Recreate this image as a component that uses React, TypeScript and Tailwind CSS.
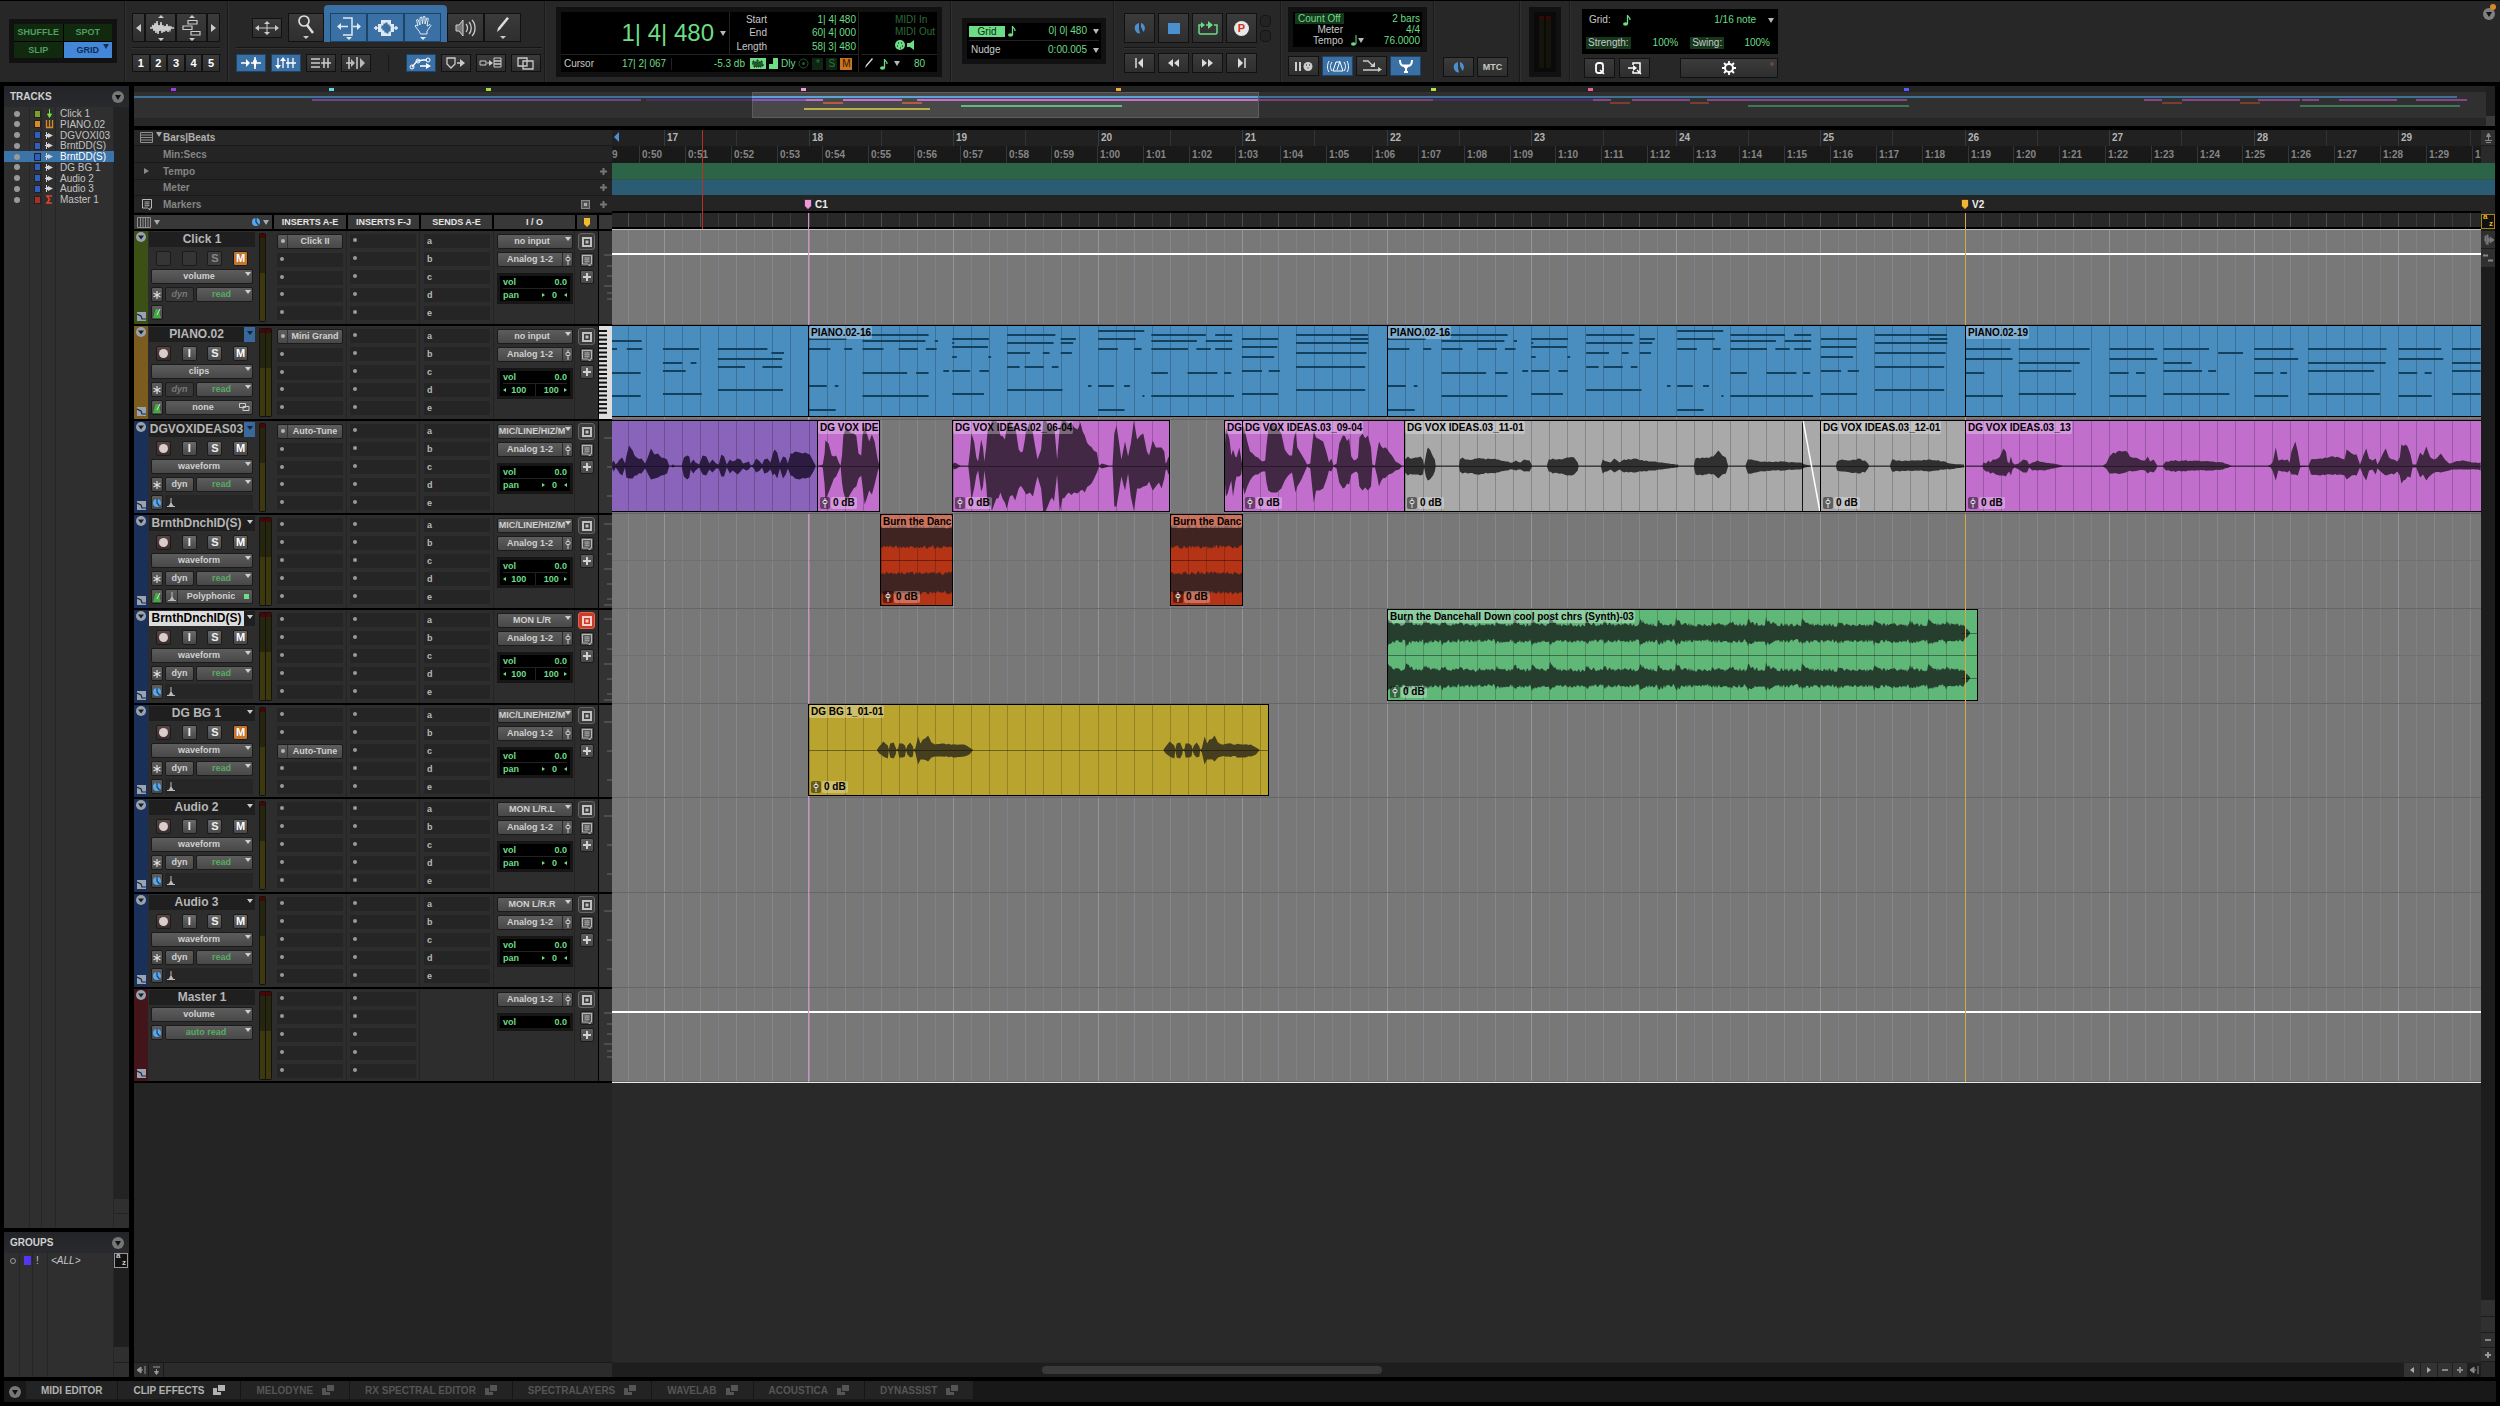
import React from "react";

type Pt = [number, number, number];
const F = "font-['Liberation_Sans',Arial,sans-serif]";

/* ---------- timeline geometry ---------- */
const BAR = 144.5;
const BAR17 = 52;
const LANE_H = 92;
const TW = 1869;

const parse = (s: string): Pt[] => s.split(",").map((p) => p.trim().split(" ").map(Number) as Pt);
const rnd = (n: number) => {
  const v = Math.sin(n * 127.1 + 3.7) * 43758.5453;
  return v - Math.floor(v);
};

function envelope(src: string, origin: number, scale: number, mid = 46, shift = 0) {
  const pts = parse(src).map(([x, u, d]) => [origin + (x + shift) / scale, u, d] as Pt);
  const full: Pt[] = [];
  pts.forEach((p, i) => {
    full.push(p);
    const n = pts[i + 1];
    if (!n) return;
    const steps = Math.floor((n[0] - p[0]) / 2);
    for (let k = 1; k < steps; k++) {
      const t = k / steps;
      const j = 0.86 + rnd(p[0] + k * 1.7) * 0.24;
      full.push([p[0] + (n[0] - p[0]) * t, (p[1] + (n[1] - p[1]) * t) * j, (p[2] + (n[2] - p[2]) * t) * j]);
    }
  });
  const top = full.map(([x, u]) => `${x.toFixed(1)},${(mid - u - 0.4).toFixed(1)}`);
  const bot = full.map(([x, , d]) => `${x.toFixed(1)},${(mid + d + 0.4).toFixed(1)}`).reverse();
  return `M${top.join("L")}L${bot.join("L")}Z`;
}

function band(from: number, to: number, mid: number, base: number, spike: number, seed: number) {
  const top: string[] = [];
  const bot: string[] = [];
  for (let x = from; x <= to; x += 1) {
    const ph = ((x - from) % 18) / 18;
    const kick = Math.exp(-ph * 4) * spike * rnd(Math.floor((x - from) / 18) + seed);
    const fade = Math.min(1, (to - x) / 8 + 0.1);
    top.push(`${x},${(mid - (base + kick + rnd(x + seed) * 3.6) * fade).toFixed(1)}`);
    bot.push(`${x},${(mid + (base + kick * 0.7 + rnd(x * 1.3 + seed) * 3.6) * fade).toFixed(1)}`);
  }
  return `M${top.join("L")}L${bot.reverse().join("L")}Z`;
}

const GRID = Array.from({ length: 107 }, (_, k) => k - 3).map((k) => ({
  x: Math.round(BAR17 + (k * BAR) / 8),
  major: k % 8 === 0,
  beat: k % 2 === 0,
}));

/* ---------- waveforms ---------- */
const W_PURPLE =
  "27 3 2,31 5 5,35 1 1,44 6 7,50 8 9,56 2 1,59 9 11,65 20 12,73 15 12,82 8 9,93 7 7,101 2 2,107 8 7,114 17 13,122 11 12,130 12 11,137 8 9,150 6 7,155 0 0,160 0 0,163 1 1,168 0 0,183 0 0,188 8 10,195 10 13,200 9 11,203 2 3,209 6 7,214 3 4,222 1 1,230 10 8,238 9 9,245 2 3,252 6 6,260 2 2,266 1 2,272 11 10,278 9 10,284 1 1,291 6 7,297 4 4,303 5 6,308 7 8,315 6 5,320 2 2,328 3 4,333 4 3,338 0 0,343 1 1,350 7 6,358 4 4,363 1 1,368 6 7,375 7 6,382 3 3,387 12 9,391 16 7,397 13 12,403 2 2,410 9 12,416 8 8,421 2 2,427 12 9,437 14 12,447 13 13,460 13 12,470 11 11,478 4 5,483 0 0";
const W_PINK1 =
  "488 0 0,499 1 1,503 12 18,505 25 33,512 22 26,519 10 18,524 9 12,529 10 10,535 3 4,539 0 0,542 10 16,545 30 25,551 38 34,560 33 28,568 32 22,574 30 20,579 12 12,585 10 9,588 30 20,593 39 38,599 30 30,603 24 24,609 31 28,615 24 18,622 6 5,626 0 0";
const W_PINK2 =
  "789 0 0,793 3 3,799 2 2,808 0 0,825 0 0,829 15 15,832 32 34,838 24 22,843 8 9,847 4 4,854 26 25,858 18 20,861 4 4,865 18 18,868 34 38,878 45 44,888 44 32,897 30 26,907 26 36,911 38 42,918 45 30,930 40 34,938 16 22,947 14 22,955 34 28,963 44 26,970 32 30,980 6 10,988 16 22,993 45 45,998 45 45,1008 38 34,1017 42 35,1024 6 8,1030 38 45,1036 45 32,1050 42 26,1062 38 26,1070 36 27,1076 43 24,1086 30 26,1096 20 19,1106 15 13,1113 13 6,1118 0 0,1124 2 2,1132 1 1,1140 0 0,1148 0 0,1152 32 40,1157 40 40,1163 22 24,1168 6 10,1176 24 24,1183 9 7,1189 22 30,1196 45 44,1203 26 22,1210 30 22,1217 32 20,1225 14 19,1230 10 15,1238 25 24,1245 18 20,1252 18 16,1258 18 22,1264 14 12,1267 2 4,1270 4 3,1273 9 8,1276 6 6";
const W_PINK3 = "54 5 5,58 38 30,62 32 27,66 26 20,70 10 14,74 16 30,79 9 15,82 8 10,88 18 10,92 8 8,94 2 2";
const W_PINK4 =
  "96 40 20,100 36 28,106 24 20,112 14 14,118 12 10,130 8 8,140 4 5,146 5 5,149 20 16,153 36 24,160 42 26,172 38 26,182 32 22,190 16 14,200 10 8,206 10 6,210 26 16,214 34 26,218 18 20,226 12 14,234 6 6,240 1 0,247 2 2,251 20 20,255 34 36,260 28 24,268 26 24,276 24 22,284 12 12,289 3 4,294 7 5,299 0 0,306 2 2,312 22 16,320 30 22,334 27 18,339 9 8,345 5 6,350 6 5,354 8 7,357 28 20,364 32 24,376 30 24,383 18 20,386 1 1,392 0 1,397 14 10,401 24 20,406 19 14,420 16 9,430 10 7,438 4 4,446 2 3,452 0 0,458 0 0";
const W_GRAY1 =
  "459 6 6,466 9 9,475 7 8,482 8 8,494 9 9,499 6 8,502 0 1,506 10 10,510 18 14,515 16 13,522 9 9,526 6 5,528 0 0,580 0 0,582 6 5,588 8 7,600 6 7,620 7 8,645 7 7,665 6 6,685 4 4,700 3 3,708 5 4,718 3 3,726 6 5,738 5 5,744 0 0,777 0 0,781 6 5,790 7 7,810 6 7,822 8 9,838 8 8,846 3 4,848 0 0,898 0 0,902 6 7,912 4 5,920 3 3,928 7 6,940 3 3,950 6 6,975 7 6,1000 5 5,1020 4 4,1050 2 2,1070 1 1,1072 0 0,1106 0 0,1110 7 8,1125 8 9,1145 9 8,1154 11 9,1161 15 12,1170 10 8,1178 8 7,1183 0 0,1222 0 0,1227 6 7,1245 5 6,1265 4 5,1290 4 4,1310 4 4,1345 3 3,1355 1 1,1372 0 0,1390 0 0";
const W_GRAY2 =
  "1209 0 0,1224 0 0,1225 4 4,1230 6 5,1238 5 6,1246 7 7,1253 5 6,1256 2 2,1257 0 0,1278 0 0,1280 6 5,1288 5 5,1308 5 4,1318 6 5,1333 4 3,1338 2 3,1352 1 1";
const W_PINK5 =
  "278 0 0,319 0 0,322 3 3,328 2 5,334 5 5,338 3 7,345 6 6,352 6 8,360 8 9,365 12 9,370 17 9,376 14 10,380 4 7,384 2 5,388 9 9,392 3 3,397 1 1,407 2 3,418 6 6,427 5 6,432 1 1,440 3 4,452 5 4,470 3 4,490 2 2,513 0 0,610 0 0,618 2 2,626 9 7,635 13 7,655 14 7,670 13 5,680 8 5,695 7 4,712 5 4,718 9 7,724 4 5,732 6 6,738 2 3,741 0 0,754 0 0,762 4 4,775 5 5,800 5 5,840 5 4,875 4 4,900 3 3,921 0 0,1008 0 0,1015 1 1,1020 4 5,1027 18 14,1033 5 4,1042 6 5,1055 6 6,1060 3 4,1065 14 8,1074 24 8,1080 14 9,1086 0 1,1106 0 0,1112 6 8,1135 7 9,1160 9 8,1180 8 8,1193 6 9,1198 16 13,1210 12 9,1222 11 9,1230 1 1,1238 10 9,1245 17 14,1252 7 4,1260 5 3,1268 7 8,1272 1 2,1280 7 5,1292 17 9,1300 8 8,1312 6 8,1320 4 5,1326 8 9,1330 21 17,1345 19 10,1352 11 11,1357 1 1,1366 1 1,1375 13 11,1382 10 8,1390 19 14,1400 8 9,1410 6 6,1425 12 6,1435 6 5,1445 2 4,1460 4 3,1475 5 3,1490 4 3,1510 3 3,1521 3 4";
const W_BG =
  "282 0 0,288 3 3,300 8 6,306 6 7,313 4 8,316 0 0,320 6 7,330 7 8,336 2 4,338 0 0,343 1 1,346 6 7,356 6 7,363 4 6,366 0 0,370 4 4,378 7 7,386 3 6,388 0 0,393 1 2,397 7 8,401 13 14,408 6 9,415 10 9,430 14 11,440 7 7,450 5 6,470 6 6,510 5 7,535 5 6,550 2 4,560 0 0";

/* ---------- piano notes: row, then start-end pairs ---------- */
type Notes = [number, string][];
const N_INTRO: Notes = [
  [425, "27-93"], [448, "27-38 60-95 141-222 264-375"], [460, "384-412"], [477, "264-408"],
  [489, "141-184 203-216"], [501, "264-325 364-408"], [513, "141-192"], [519, "27-91"],
  [571, "264-410"], [583, "141-228"], [589, "27-91"],
];
const N_VERSE: Notes = [
  [395, "1116-1219"], [407, "588-736 912-1020 1235-1357 1378-1416 1559-1720"],
  [419, "468-552 789-871 1032-1066 1116-1200 1438-1519 1681-1721"],
  [425, "588-729 750-757 1235-1337 1357-1416"], [431, "789-793 912-1016 1032-1060 1559-1721"],
  [442, "789-869 1438-1517"],
  [448, "468-516 547-565 588-635 669-712 730-754 1116-1160 1196-1213 1235-1317 1336-1368 1378-1416"],
  [460, "912-963 992-1007 1032-1057 1559-1717"], [471, "789-799 870-876 1438-1510"],
  [501, "912-940 951-994 1012-1027 1559-1714"], [513, "769-782 789-829 850-871 1438-1483 1498-1523"],
  [519, "588-688 708-736 1235-1272 1316-1383 1398-1414"],
  [560, "468-508 526-534 1093-1101 1116-1151 1174-1187"], [571, "912-1036 1559-1714"],
  [583, "789-860 1438-1519"], [589, "588-736 1215-1219 1235-1420"], [630, "468-528 1116-1175"],
];
const N_OUTRO: Notes = [
  [448, "278-387 407-578 626-733 756-866 975-1070 1105-1294 1323-1426 1452-1521"], [460, "888-948"],
  [477, "278-392 626-741 975-1081 1323-1431"], [489, "407-554 756-824 1105-1292 1452-1521"],
  [513, "407-534 756-849 864-883 1105-1264 1452-1521"],
  [519, "278-324 626-672 690-711 975-1021 1038-1054 1323-1368 1386-1403"],
  [583, "407-545 756-915 1105-1278 1452-1521"], [589, "278-369 626-715 975-1057 1323-1403"],
];
function NoteBars({ notes, origin, scale }: { notes: Notes; origin: number; scale: number }) {
  return (
    <g fill="#12405f">
      {notes.flatMap(([row, spans]) =>
        spans.split(" ").map((s) => {
          const [a, b] = s.split("-").map(Number);
          return <rect key={row + s} x={origin + a / scale} y={Math.round((row - 376) / 3) - 1} width={Math.max(2, (b - a) / scale)} height="2" />;
        })
      )}
    </g>
  );
}

/* ---------- small icons ---------- */
function Svg({ w, h, children, className = "" }: { w: number; h: number; children: React.ReactNode; className?: string }) {
  return (
    <svg width={w} height={h} viewBox={`0 0 ${w} ${h}`} fill="none" className={`block shrink-0 ${className}`} aria-hidden="true">
      {children}
    </svg>
  );
}
const Tri = ({ className = "text-[#b8b8b8]" }: { className?: string }) => (
  <Svg w={6} h={5} className={className}><path d="M0 0h6L3 5z" fill="currentColor" /></Svg>
);
const CircleMenu = ({ className = "text-[#777]" }: { className?: string }) => (
  <Svg w={12} h={12} className={className}><circle cx="6" cy="6" r="6" fill="currentColor" /><path d="M3 4h6L6 9z" fill="#111" /></Svg>
);
const Fader = () => (
  <Svg w={6} h={10}><path d="M3 0v10" stroke="currentColor" /><rect x="1" y="2.500" width="4" height="3" rx="1" stroke="currentColor" fill="#555" /></Svg>
);
const Clock = () => (
  <Svg w={12} h={12}><path d="M5 1C2 2 0 4 1 7.500s3 4 5 4L5 7z" fill="#4a90cf" /><path d="M7 1c4 1 5 6 2.500 9L7 5z" fill="#4a90cf" /></Svg>
);
const BlueClock = () => (
  <Svg w={8} h={8}><circle cx="4" cy="4" r="4" fill="#5aa7ea" /><path d="M4 0v4l2.500 3" stroke="#1d3e63" strokeWidth="1.200" /></Svg>
);
const Metro = () => (
  <Svg w={8} h={10}><path d="M2.500 1h3L8 10H0z" fill="#3fae3f" /><path d="M4 7L7 1" stroke="#e0e0e0" /></Svg>
);
const Pin = () => (
  <Svg w={8} h={9}><path d="M4 0v6M0 8.500h8M2 8l2-3 2 3z" stroke="#bbb" fill="#bbb" /></Svg>
);
const Note = ({ className = "text-[#6ddc86]" }: { className?: string }) => (
  <Svg w={8} h={12} className={className}><ellipse cx="2.500" cy="10" rx="2.500" ry="1.800" fill="currentColor" /><path d="M4.500 10V1c0 2 3 2 2.500 5" stroke="currentColor" strokeWidth="1.300" /></Svg>
);
const Flag = ({ color }: { color: string }) => (
  <Svg w={8} h={11}><path d="M.5.5h7V7L4 10.500.5 7z" fill={color} stroke="#111" strokeWidth=".6" /></Svg>
);
const ListIcon = () => (
  <Svg w={13} h={11}><path d="M.5.500h12v10H.5zM1 3h11M1 5.500h11M1 8h11" stroke="#8f8f8f" /></Svg>
);
const GridIcon = () => (
  <Svg w={14} h={11}><path d="M.5.500h13v10H.5zM3.500 1v9M6 1v9M8.500 1v9M11 1v9" stroke="#8f8f8f" /></Svg>
);
const Comment = () => (
  <Svg w={10} h={11}><path d="M.5.500h9v8.500H8V11L5.500 9h-5zM2.500 3h5M2.500 4.900h5M2.500 6.800h5" stroke="currentColor" strokeWidth=".8" /></Svg>
);
const Plus = ({ s = 8 }: { s?: number }) => (
  <Svg w={s} h={s}><path d={`M${s / 2} 0v${s}M0 ${s / 2}h${s}`} stroke="currentColor" strokeWidth="2" /></Svg>
);
const PopOut = () => (
  <Svg w={12} h={10}><path d="M0 3h4v4h4v3H0z" fill="currentColor" /><path d="M5 0h7v6H5z" fill="currentColor" /></Svg>
);
const AZ = ({ yellow = false }: { yellow?: boolean }) => (
  <button aria-label="Keyboard focus" className={`relative block h-[15px] w-[14px] shrink-0 border bg-[#111] ${yellow ? "border-[#a8831c] text-[#e6b72e]" : "border-[#999] text-[#ccc]"} text-[8px] font-bold leading-[8px]`}>
    <span className="absolute left-px top-[-2px]">a</span>
    <span className="absolute bottom-0 right-px">z</span>
  </button>
);

/* ---------- toolbar ---------- */
function TB({ label, on = false, className = "", children }: { label: string; on?: boolean; className?: string; children: React.ReactNode }) {
  return (
    <button
      aria-label={label}
      aria-pressed={on}
      className={`flex shrink-0 items-center justify-center border ${on ? "border-[#1c4468] bg-[#3a70a4] text-[#dfe9f2]" : "border-[#111] bg-linear-to-b from-[#3b3b3b] to-[#2e2e2e] text-[#c8c8c8]"} ${className}`}
    >
      {children}
    </button>
  );
}
const Sec = ({ className, children }: { className: string; children?: React.ReactNode }) => (
  <div className={`flex shrink-0 flex-col border-r border-[#191919] shadow-[1px_0_0_#303030] ${className}`}>{children}</div>
);
const Rule = ({ className = "" }: { className?: string }) => <div className={`h-[2px] border-t border-[#161616] bg-[#313131] ${className}`} />;
const G = "text-[#6ddc86]";

const UpDown = () => <path d="M12 3l3-3 3 3zM12 23l3 3 3-3z" fill="#ccc" />;

function Toolbar() {
  const small = "h-[20px] w-[31px]";
  const tool = "h-[29px] w-[37px]";
  return (
    <header className="flex h-[82px] shrink-0 overflow-hidden border-t border-black bg-[#272727] text-[10px] leading-3">
      <Sec className="w-[125px] pl-[9px] pt-[18px]">
        <div className="grid h-[44px] w-[108px] grid-cols-2 gap-px border-[5px] border-[#111] bg-black text-[9px] font-bold text-[#4f9f5f]">
          <button className="bg-[#10290f]">SHUFFLE</button>
          <button className="bg-[#10290f]">SPOT</button>
          <button className="bg-[#10290f]">SLIP</button>
          <button className="relative bg-[#4487d8] text-[#0f2c55]">GRID<span className="absolute right-[3px] top-[2px]"><Tri className="text-[#16304f]" /></span></button>
        </div>
      </Sec>
      <Sec className="w-[103px] gap-[5px] pl-[7px] pt-[12px]">
        <div className="flex">
          <TB label="Zoom out" className="h-[29px] w-[13px]"><Svg w={5} h={8}><path d="M5 0v8L0 4z" fill="#ccc" /></Svg></TB>
          <TB label="Audio zoom" className="h-[29px] w-[31px]">
            <Svg w={30} h={26}><UpDown /><path d="M4 13h2l1-3 1 6 1-8 1 10 1-12 1 13 1-9 1 6 1-9 1 11 1-8 1 7 1-6 1 5 1-7 1 8 1-6 1 4 1-3 1 1h2" stroke="#ccc" strokeWidth="1.500" /></Svg>
          </TB>
          <TB label="MIDI zoom" className="h-[29px] w-[31px]">
            <Svg w={30} h={26}><UpDown /><path d="M11 5.500h9v3.500h-9zM6 11h9v3.500H6zM14 16.500h9v3.500h-9z" stroke="#ccc" strokeWidth="1.200" /></Svg>
          </TB>
          <TB label="Zoom in" className="h-[29px] w-[13px]"><Svg w={5} h={8}><path d="M0 0v8l5-4z" fill="#ccc" /></Svg></TB>
        </div>
        <Rule className="w-[88px]" />
        <div className="flex w-[88px]">
          {["1", "2", "3", "4", "5"].map((n) => (
            <button key={n} className="h-[18px] min-w-0 flex-1 border border-[#111] bg-linear-to-b from-[#3b3b3b] to-[#2e2e2e] text-[11px] font-bold text-white">{n}</button>
          ))}
        </div>
      </Sec>
      <Sec className="w-[317px] pt-[4px]">
        <div className="flex h-[37px] items-end pl-[24px]">
          <TB label="Trim" className="mb-1 mr-[6px] h-[20px] w-[30px]">
            <Svg w={24} h={14}><path d="M3 7h18M12 2v10" stroke="#ccc" /><path d="M4 4v6L0 7zM20 4v6l4-3zM9 3h6l-3-3zM9 11h6l-3 3z" fill="#ccc" /></Svg>
          </TB>
          <TB label="Zoomer" className="h-[29px] w-[36px]">
            <Svg w={20} h={25}><circle cx="8" cy="6" r="5" stroke="#ddd" strokeWidth="1.700" /><path d="M11 10l6 8" stroke="#ddd" strokeWidth="2.500" /><path d="M7 21h6l-3 3z" fill="#ccc" /></Svg>
          </TB>
          <div className="flex h-[37px] shrink-0 items-end rounded-t-sm bg-[#3a70a4] px-[6px]">
            <TB on label="Trimmer" className={tool}>
              <Svg w={26} h={25}><path d="M7 3h9v17H7" stroke="#dfe9f2" strokeWidth="1.500" /><path d="M3 11.500h9M17 11.500h7" stroke="#dfe9f2" strokeWidth="1.500" /><path d="M5 8v7l-4-3.500zM21 8v7l4-3.500zM10 22h6l-3 3z" fill="#dfe9f2" /></Svg>
            </TB>
            <TB on label="Selector" className={tool}>
              <Svg w={24} h={22}><path d="M7 3h10v4h3v8h-3v4H7v-4H4V7h3z" fill="#dfe9f2" /><path d="M0 11h4M20 11h4M2 9v4M22 9v4" stroke="#dfe9f2" strokeWidth="1.500" /><path d="M7 11h1V9h1v4h1V7h1v8h1V6h1v10h1V8h1v6h1v-4h1" stroke="#3a70a4" strokeWidth="1.200" /></Svg>
            </TB>
            <TB on label="Grabber" className={tool}>
              <Svg w={20} h={25}><path d="M5 11L3.500 5 5 4.500 7 10V2.500L8.700 2 9.500 9l.8-7.500 1.700.2V9l1.800-6 1.500.5L14 11l3-1.500 1 1-4 5.500v3H7.500L6 16l-4-5 1-1z" stroke="#dfe9f2" /><path d="M7 22h6l-3 3z" fill="#dfe9f2" /></Svg>
            </TB>
          </div>
          <TB label="Scrubber" className={tool}>
            <Svg w={22} h={20}><path d="M1 7h3l4-5v16l-4-5H1z" fill="#777" stroke="#ccc" /><path d="M11 6c2 2 2 6 0 8M14 4c3 3 3 9 0 12M17 2c4 4 4 12 0 16" stroke="#ccc" strokeWidth="1.300" /></Svg>
          </TB>
          <TB label="Pencil" className={tool}>
            <Svg w={16} h={25}><path d="M2 17l1-4L12 2l2 1.500-9 11z" fill="#ddd" /><path d="M5 21h6l-3 3z" fill="#ccc" /></Svg>
          </TB>
        </div>
        <Rule className="ml-[8px] mt-[5px] w-[306px]" />
        <div className="mt-[5px] flex gap-[5px] pl-[8px]">
          <TB on label="Tab to transient" className="h-[18px] w-[30px]"><Svg w={22} h={12}><path d="M1 6h6M15 0v12M11 6h10" stroke="#fff" strokeWidth="1.500" /><path d="M6 2v8l4-4zM13 4l2-3 2 3-2 8z" fill="#fff" /></Svg></TB>
          <TB on label="Mirrored MIDI" className="h-[18px] w-[30px]"><Svg w={22} h={12}><path d="M3 1v9M8 11V2M13 1v10M18 1v10M11 6h10" stroke="#fff" strokeWidth="1.300" /><path d="M0 8h6l-3 4zM5 4h6L8 0z" fill="#fff" /></Svg></TB>
          <TB label="Automation follows edit" className="h-[18px] w-[30px]"><Svg w={22} h={12}><path d="M1 2h9M1 6h9M1 10h9M14 1v10M18 1v10M11 6h10" stroke="#ccc" strokeWidth="1.500" /></Svg></TB>
          <TB label="Link" className="h-[18px] w-[30px]"><Svg w={22} h={12}><path d="M4 0v12M1 6h8M12 0v12" stroke="#ccc" strokeWidth="1.500" /><path d="M6 2v8l4-4zM15 1v10l5-5z" fill="#bbb" /></Svg></TB>
          <div className="mx-[12px] w-px bg-[#191919]" />
          <TB on label="Automation" className="h-[18px] w-[30px]"><Svg w={24} h={13}><path d="M3 10l5-6 6-1h4M11 9h9" stroke="#fff" strokeWidth="1.300" /><circle cx="3" cy="10" r="2" stroke="#fff" /><circle cx="9" cy="4" r="2" stroke="#fff" /><circle cx="19" cy="3" r="2" stroke="#fff" /><path d="M17 6v6l5-3z" fill="#fff" /></Svg></TB>
          <TB label="Marker" className="h-[18px] w-[30px]"><Svg w={20} h={12}><path d="M1 1h8v6l-4 4-4-4z" stroke="#ccc" strokeWidth="1.300" /><path d="M11 6h4" stroke="#ccc" strokeWidth="1.500" /><path d="M14 2v8l5-4z" fill="#ccc" /></Svg></TB>
          <TB label="Insertion follows" className="h-[18px] w-[30px]"><Svg w={24} h={12}><path d="M1 4h6v4H1zM15 1h7v3h-7zM15 4h7v3h-7zM15 7h7v3h-7zM8 6h3" stroke="#ccc" /><path d="M10 3v6l4-3z" fill="#ccc" /></Svg></TB>
          <TB label="Layered editing" className="h-[18px] w-[30px]"><Svg w={18} h={13}><path d="M1 1h9v8H1zM6 4h10v8H6z" stroke="#ccc" strokeWidth="1.300" /></Svg></TB>
        </div>
      </Sec>
      <Sec className="w-[406px] pl-[11px] pt-[6px]">
        <div className="flex h-[70px] w-[386px] border-[5px] border-[#111] bg-black">
          <div className="w-[298px] border-r border-[#222]">
            <div className="flex h-[42px]">
              <div className={`flex w-[169px] items-center justify-end gap-[6px] whitespace-nowrap border-r border-[#222] pr-[3px] text-[24px] leading-none ${G}`}>1| 4| 480<Tri /></div>
              <dl className="grid flex-1 grid-cols-[37px_1fr] pr-[2px] pt-[2px] text-right leading-3 text-[#c8c8c8]">
                <dt>Start</dt><dd className={G}>1| 4| 480</dd>
                <dt>End</dt><dd className={G}>60| 4| 000</dd>
                <dt>Length</dt><dd className={G}>58| 3| 480</dd>
              </dl>
            </div>
            <div className="flex h-[18px] items-center whitespace-nowrap border-t border-[#222] pl-[3px] text-[#c8c8c8]">
              <span className="w-[58px] shrink-0">Cursor</span>
              <span className={`w-[50px] shrink-0 border-r border-[#222] ${G}`}>17| 2| 067</span>
              <span className={`w-[73px] shrink-0 text-right ${G}`}>-5.3 db</span>
              <div className={`flex items-center gap-[3px] pl-[5px] ${G}`}>
                <span className="flex h-[11px] w-[16px] items-center justify-center bg-[#6ddc86]"><Svg w={14} h={9}><path d="M1 5h1V2h1v6h1V3h1v5h1V1h1v7h1V3h1v5h1V2h1v5h1V5" stroke="#0b2b12" /></Svg></span>
                <Svg w={9} h={11}><path d="M4 0h5v11H0V6h4z" fill="#6ddc86" /></Svg>
                <span>Dly</span>
                <Svg w={11} h={11}><circle cx="5.500" cy="5.500" r="4.500" stroke="#1f5a2c" /><circle cx="5.500" cy="5.500" r="1.500" fill="#1f5a2c" /></Svg>
                <span className="h-[12px] w-[11px] bg-[#0f2413] text-center text-[#2d7a3c]">*</span>
                <span className="h-[12px] w-[11px] bg-[#0f2413] text-center text-[#2d7a3c]">S</span>
                <span className="h-[12px] w-[12px] bg-[#c9741f] text-center text-[#2c1604]">M</span>
              </div>
            </div>
          </div>
          <div className="ml-[2px] flex-1">
            <div className="h-[42px] pl-[34px] pt-[2px] text-[#2d6b39]">
              <div className="whitespace-nowrap">MIDI In</div><div className="whitespace-nowrap">MIDI Out</div>
              <Svg w={24} h={12} className="mt-px"><circle cx="5" cy="6" r="5" fill="#6ddc86" /><path d="M3 4h1M6 4h1M2 7h1M7 7h1M5 9h1" stroke="#000" /><path d="M12 4h3l4-3v10l-4-3h-3z" fill="#6ddc86" /></Svg>
            </div>
            <div className={`flex h-[18px] items-center gap-[6px] border-t border-[#222] pl-[3px] ${G}`}>
              <Svg w={10} h={11}><path d="M1 10l1-3 6-7 1 1-6 7z" fill="#ddd" /></Svg><Note /><Tri /><span className="ml-[8px]">80</span>
            </div>
          </div>
        </div>
      </Sec>
      <Sec className="w-[163px] pl-[11px] pt-[17px]">
        <div className="h-[46px] w-[144px] border-[5px] border-[#111] bg-black px-[2px] pt-[2px] text-[#c8c8c8]">
          <div className="flex h-[16px] items-center gap-[3px] border-b border-[#222] pb-[3px]">
            <span className="w-[36px] bg-[#6ddc86] text-center leading-[11px] text-[#0b2b12]">Grid</span><Note /><span className={`ml-auto mr-[3px] ${G}`}>0| 0| 480</span><Tri />
          </div>
          <div className="flex h-[18px] items-center gap-[6px]"><span className="mr-auto pl-[2px]">Nudge</span><span className={G}>0:00.005</span><Tri /></div>
        </div>
      </Sec>
      <Sec className="w-[167px] gap-[4px] pl-[10px] pt-[12px]">
        <div className="flex gap-[3px]">
          <TB label="Online" className="h-[30px] w-[31px]"><Clock /></TB>
          <TB label="Stop" className="h-[30px] w-[31px]"><span className="h-[11px] w-[12px] bg-[#4a90cf]" /></TB>
          <TB label="Loop play" className="h-[30px] w-[31px]"><Svg w={22} h={15}><path d="M4 4H2v8l1 1h16l1-1V4h-3M9 4h2" stroke="#6ddc86" strokeWidth="1.500" /><path d="M4 1v6l4-3zM11 0v8l5-4z" fill="#6ddc86" /></Svg></TB>
          <TB label="Record" className="h-[30px] w-[31px]"><span className="h-[15px] w-[15px] rounded-full bg-[#e8e8e8] text-center text-[11px] font-bold leading-[15px] text-[#d2321e]">P</span></TB>
          <div className="flex flex-col justify-center gap-[3px]"><span className="h-[12px] w-[11px] rounded-sm border border-[#151515] bg-[#232323]" /><span className="h-[12px] w-[11px] rounded-sm border border-[#151515] bg-[#232323]" /></div>
        </div>
        <Rule className="w-[132px]" />
        <div className="flex gap-[3px]">
          <TB label="Return to zero" className={small}><Svg w={9} h={10}><path d="M1 0v10" stroke="#ddd" strokeWidth="1.500" /><path d="M8 0v10L3 5z" fill="#ddd" /></Svg></TB>
          <TB label="Rewind" className={small}><Svg w={11} h={8}><path d="M5 0v8L0 4zM11 0v8L6 4z" fill="#ddd" /></Svg></TB>
          <TB label="Fast forward" className={small}><Svg w={11} h={8}><path d="M0 0v8l5-4zM6 0v8l5-4z" fill="#ddd" /></Svg></TB>
          <TB label="Go to end" className={small}><Svg w={9} h={10}><path d="M8 0v10" stroke="#ddd" strokeWidth="1.500" /><path d="M1 0v10l5-5z" fill="#ddd" /></Svg></TB>
        </div>
      </Sec>
      <Sec className="w-[153px] gap-[4px] pl-[7px] pt-[6px]">
        <div className="flex h-[45px] w-[139px] flex-col justify-center border-[5px] border-[#111] bg-black px-[2px] text-[#c8c8c8]">
          <div className="flex h-[11px] justify-between leading-[11px]"><span className={`bg-[#15371c] px-[3px] ${G}`}>Count Off</span><span className={G}>2 bars</span></div>
          <div className="flex h-[11px] justify-between leading-[11px]"><span className="w-[48px] text-right">Meter</span><span className={G}>4/4</span></div>
          <div className="flex h-[11px] items-center leading-[11px]"><span className="mr-[8px] w-[48px] text-right">Tempo</span><Svg w={7} h={11}><ellipse cx="2.500" cy="9" rx="2.500" ry="1.800" fill="#6ddc86" /><path d="M5 9V0" stroke="#6ddc86" /></Svg><Tri /><span className={`ml-auto ${G}`}>76.0000</span></div>
        </div>
        <div className="flex gap-[3px]">
          <TB label="Wait for note" className={small}><Svg w={18} h={11}><path d="M1 1v9M5 1v9" stroke="#ccc" strokeWidth="2" /><circle cx="13" cy="5.500" r="4.500" fill="#ccc" /><path d="M11 4h1M14 4h1M12.500 7h1" stroke="#222" /></Svg></TB>
          <TB on label="Metronome" className={small}><Svg w={22} h={13}><path d="M9 2h4l3 9H6z" stroke="#fff" /><path d="M10 10l3-9" stroke="#fff" /><path d="M5 2c-2 3-2 6 0 9M2 1c-2 4-2 8 0 11M17 2c2 3 2 6 0 9M20 1c2 4 2 8 0 11" stroke="#fff" /></Svg></TB>
          <TB label="Tempo ruler" className={small}><Svg w={20} h={12}><path d="M1 1h5l5 5M1 10h17" stroke="#ccc" strokeWidth="1.300" /><path d="M8 7h5V2zM16 7v5l4-2.500z" fill="#ccc" /></Svg></TB>
          <TB on label="MIDI merge" className={small}><Svg w={16} h={14}><path d="M2 1c0 4 1 6 4 6h4c3 0 4-2 4-6M8 7v7" stroke="#fff" strokeWidth="2" /><path d="M4 5.500h8L8 11zM6 12h4v2H6z" fill="#fff" /></Svg></TB>
        </div>
      </Sec>
      <Sec className="w-[86px] pl-[9px] pt-[56px]">
        <div className="flex gap-[3px]"><TB label="External sync" className={small}><Clock /></TB><TB label="MTC" className={`${small} text-[9px] font-bold`}>MTC</TB></div>
      </Sec>
      <Sec className="w-[50px] items-center pt-[6px]">
        <div className="flex h-[70px] w-[32px] justify-center gap-[2px] border-[5px] border-[#111] bg-[#0a0a0a] py-[4px]">
          {[0, 1].map((i) => <div key={i} className="w-[5px] border-t-[3px] border-[#3a0606] bg-[#14140a]" />)}
        </div>
      </Sec>
      <div className="flex w-[220px] shrink-0 flex-col gap-[4px] pl-[12px] pt-[8px]">
        <div className="flex h-[45px] w-[196px] flex-col justify-between bg-black py-[5px] pl-[4px] pr-[4px] text-[#c8c8c8]">
          <div className="flex items-center pl-[3px]"><span className="w-[34px]">Grid:</span><Note /><span className={`ml-auto mr-[12px] ${G}`}>1/16 note</span><Tri /></div>
          <div className="flex items-center pr-[4px]"><span className="bg-[#15371c] px-[2px]">Strength:</span><span className={`ml-[22px] ${G}`}>100%</span><span className="ml-[12px] bg-[#15371c] px-[2px]">Swing:</span><span className={`ml-auto ${G}`}>100%</span></div>
        </div>
        <div className="flex">
          <TB label="Quantize" className={`${small} ml-[2px] mr-[4px]`}><Svg w={11} h={13}><rect x="2" y="1" width="7" height="10" rx="2.500" stroke="#fff" strokeWidth="1.800" /><path d="M6 8l4 4" stroke="#fff" strokeWidth="1.600" /></Svg></TB>
          <TB label="Apply quantize" className={`${small} mr-auto`}><Svg w={14} h={13}><path d="M5 3V1h7v10H5V9M9 8l4 4" stroke="#fff" strokeWidth="1.500" /><path d="M0 6h6" stroke="#fff" strokeWidth="1.500" /><path d="M5 3v6l4-3z" fill="#fff" /></Svg></TB>
          <TB label="Settings" className="relative mr-[12px] h-[20px] w-[98px]">
            <Svg w={14} h={14}><circle cx="7" cy="7" r="4" stroke="#fff" strokeWidth="2" /><path d="M7 0v3M7 11v3M0 7h3M11 7h3M2 2l2 2M10 10l2 2M12 2l-2 2M4 10l-2 2" stroke="#fff" strokeWidth="1.800" /></Svg>
            <span className="absolute right-[3px] top-[3px] h-[4px] w-[4px] rounded-full bg-[#6b4b33]" />
          </TB>
        </div>
      </div>
      <div className="relative flex flex-1 justify-end pr-[5px] pt-[7px]">
        <button aria-label="Toolbar menu" className="h-[12px]"><CircleMenu className="text-[#808080]" /></button>
        <span className="absolute right-[4px] top-[3px] h-[6px] w-[6px] rounded-full bg-[#d9872a]" />
      </div>
    </header>
  );
}

/* ---------- sidebar ---------- */
const TRACK_LIST = [
  ["Click 1", "#7aa02c", "click"], ["PIANO.02", "#d98a26", "piano"], ["DGVOXI03", "#2e5fc0", "audio"],
  ["BrntDD(S)", "#2e5fc0", "audio"], ["BrntDD(S)", "#2e5fc0", "audio"], ["DG BG 1", "#2e5fc0", "audio"],
  ["Audio 2", "#2e5fc0", "audio"], ["Audio 3", "#2e5fc0", "audio"], ["Master 1", "#a82e26", "master"],
];
const TypeIcon = ({ kind }: { kind: string }) => (
  <Svg w={9} h={9}>
    {kind === "click" && <path d="M4.500 0v7M2.500 5l2 3.500 2-3.500z" stroke="#6fe04a" fill="#6fe04a" />}
    {kind === "piano" && <path d="M1.500 0v7.500h6V0M4.500 0v7" stroke="#d98a26" strokeWidth="1.300" />}
    {kind === "audio" && <path d="M0 4h1V1h1v2h1V2l5 2.500L3 7V6H2v2H1V5H0z" fill="#d5d5d5" />}
    {kind === "master" && <path d="M7 1H2l2.500 3.500L2 8h5" stroke="#e8452c" strokeWidth="1.500" />}
  </Svg>
);
const SIDE_HEAD = "flex h-[21px] items-center justify-between bg-linear-to-b from-[#232427] to-[#292a2e] pl-[6px] pr-[5px] font-bold text-[#d0d0d0]";
function Sidebar() {
  return (
    <aside className="ml-[4px] flex w-[125px] shrink-0 flex-col gap-[4px] text-[10px] leading-[11px] text-[#c4c4c4]">
      <section className="flex min-h-0 flex-1 flex-col">
        <h2 className={SIDE_HEAD}>TRACKS<button aria-label="Tracks menu"><CircleMenu /></button></h2>
        <div className="flex flex-1 bg-[#2f2f2f]">
          <div className="relative flex-1">
            <div className="absolute inset-0 grid grid-cols-[26px_12px_14px_1fr] *:border-r *:border-[#262626]"><i /><i /><i /><i /></div>
            <ul className="relative mt-px grid h-[97px] grid-rows-9">
              {TRACK_LIST.map(([n, c, k], i) => (
                <li key={i} className={`grid grid-cols-[30px_11px_15px_1fr] items-center ${i === 4 ? "bg-[#3a74a8] text-white" : ""}`}>
                  <span className="ml-[10px] h-[6px] w-[6px] rounded-full bg-[#999]" />
                  <span className="h-[8px] w-[7px] border border-[#222]" style={{ backgroundColor: c }} />
                  <TypeIcon kind={k} />
                  <span className="whitespace-nowrap">{n}</span>
                </li>
              ))}
            </ul>
          </div>
          <div className="flex w-[15px] flex-col justify-end gap-px bg-[#232323]"><span className="h-[14px] bg-[#2f2f2f]" /><span className="h-[14px] bg-[#2f2f2f]" /></div>
        </div>
      </section>
      <section className="flex h-[145px] shrink-0 flex-col">
        <h2 className={SIDE_HEAD}>GROUPS<button aria-label="Groups menu"><CircleMenu /></button></h2>
        <div className="flex flex-1 bg-[#2f2f2f]">
          <div className="relative flex-1">
            <div className="absolute inset-0 grid grid-cols-[16px_13px_15px_1fr] *:border-r *:border-[#262626]"><i /><i /><i /><i /></div>
            <div className="relative grid grid-cols-[20px_12px_15px_1fr] items-center pt-[2px]">
              <span className="ml-[6px] h-[6px] w-[6px] rounded-full border border-[#999]" />
              <span className="h-[9px] w-[7px] bg-[#5636f5]" />
              <span>!</span>
              <span className="italic">&lt;ALL&gt;</span>
            </div>
          </div>
          <div className="flex w-[15px] flex-col gap-px bg-[#1f1f1f]"><AZ /><span className="flex-1" /><span className="h-[15px] bg-[#2f2f2f]" /><span className="h-[14px] bg-[#2f2f2f]" /></div>
        </div>
      </section>
    </aside>
  );
}

/* ---------- overview ---------- */
const OV: [string, number, number, number][] = [
  ["#3d7296", 96, 134, 752], ["#5aa3d6", 96, 752, 1258], ["#3d7296", 96, 1258, 2457],
  ["#6a4590", 99, 312, 641], ["#4b2d6c", 99, 646, 752], ["#8a50c8", 99, 752, 806], ["#c46fd0", 99, 806, 823],
  ["#c46fd0", 99, 843, 902], ["#c46fd0", 99, 917, 1258], ["#7a4080", 99, 1258, 1433], ["#4c2a70", 99, 1433, 1593],
  ["#86468c", 99, 1593, 1611], ["#86468c", 99, 1632, 1690], ["#86468c", 99, 1707, 1907], ["#86468c", 99, 2144, 2162],
  ["#86468c", 99, 2182, 2240], ["#86468c", 99, 2258, 2300], ["#86468c", 99, 2302, 2319], ["#86468c", 99, 2339, 2397],
  ["#86468c", 99, 2416, 2467], ["#b85a48", 102, 823, 843], ["#b85a48", 102, 902, 922], ["#7d3d30", 102, 1610, 1630],
  ["#7d3d30", 102, 1690, 1709], ["#7d3d30", 102, 2162, 2182], ["#7d3d30", 102, 2240, 2260],
  ["#62b883", 105, 961, 1122], ["#407556", 105, 1748, 1909], ["#407556", 105, 2300, 2460], ["#bcae48", 108, 804, 930],
];
const OV_MARKS: [string, number][] = [
  ["#9b3fe0", 171], ["#5fd8e8", 329], ["#9fe03f", 486], ["#f09ae0", 801], ["#f0b030", 1116], ["#a8e840", 1431], ["#f060a0", 1588], ["#5060ff", 1904],
];
function Overview() {
  return (
    <div className="flex h-[40px] shrink-0 bg-[#272727]">
      <svg viewBox="134 86 2352 40" preserveAspectRatio="none" className="block h-full min-w-0 flex-1" shapeRendering="crispEdges" role="img" aria-label="Session overview">
        <rect x="134" y="86" width="2352" height="6" fill="#232323" />
        <rect x="134" y="92" width="2352" height="26" fill="#303030" />
        <rect x="752" y="92" width="506" height="25" fill="#484848" stroke="#5c5c5c" />
        {OV_MARKS.map(([c, x]) => <rect key={x} x={x} y="88" width="5" height="3" fill={c} />)}
        {OV.map(([c, y, a, b], i) => <rect key={i} x={a} y={y} width={b - a} height="2" fill={c} />)}
      </svg>
      <div className="flex w-[9px] flex-col justify-end bg-[#202020]"><span className="h-[10px] bg-[#3a3a3a]" /></div>
    </div>
  );
}

/* ---------- track controls ---------- */
type Track = {
  name: string; strip: string; kind: "click" | "midi" | "audio" | "master"; view: string; input?: string;
  stereo?: boolean; muted?: boolean; selected?: boolean; insert?: [number, string]; bluemenu?: boolean; elastic?: boolean; armed?: boolean;
};
const TRACKS: Track[] = [
  { name: "Click 1", strip: "bg-[#3c4f14]", kind: "click", view: "volume", input: "no input", muted: true, insert: [0, "Click II"] },
  { name: "PIANO.02", strip: "bg-[#7c5c1e]", kind: "midi", view: "clips", input: "no input", stereo: true, insert: [0, "Mini Grand"], bluemenu: true },
  { name: "DGVOXIDEAS03", strip: "bg-[#1a3058]", kind: "audio", view: "waveform", input: "MIC/LINE/HIZ/M", insert: [0, "Auto-Tune"], bluemenu: true },
  { name: "BrnthDnchID(S)", strip: "bg-[#1a3058]", kind: "audio", view: "waveform", input: "MIC/LINE/HIZ/M", stereo: true, elastic: true },
  { name: "BrnthDnchID(S)", strip: "bg-[#1a3058]", kind: "audio", view: "waveform", input: "MON L/R", stereo: true, selected: true, armed: true },
  { name: "DG BG 1", strip: "bg-[#1a3058]", kind: "audio", view: "waveform", input: "MIC/LINE/HIZ/M", muted: true, insert: [2, "Auto-Tune"] },
  { name: "Audio 2", strip: "bg-[#1a3058]", kind: "audio", view: "waveform", input: "MON L/R.L" },
  { name: "Audio 3", strip: "bg-[#1a3058]", kind: "audio", view: "waveform", input: "MON L/R.R" },
  { name: "Master 1", strip: "bg-[#43141a]", kind: "master", view: "volume", stereo: true },
];
const FACE = "rounded-[2px] border border-[#1b1b1b] bg-linear-to-b from-[#5d5d5d] to-[#484848]";
const BTN = `${FACE} text-[#d0d0d0]`;

function Drop({ label, value, className = "", color = "text-[#d0d0d0]" }: { label: string; value: string; className?: string; color?: string }) {
  return (
    <div className={`relative h-[15px] ${className}`}>
      <select aria-label={label} className={`block h-[15px] w-full appearance-none pl-0 pr-[6px] text-center leading-[13px] [text-align-last:center] ${FACE} ${color}`}>
        <option>{value}</option>
      </select>
      <span className="pointer-events-none absolute right-[2px] top-[3px]"><Svg w={6} h={4}><path d="M0 0h6L3 4z" fill="#d0d0d0" /></Svg></span>
    </div>
  );
}
function Meter({ n }: { n: number }) {
  return (
    <div className="mt-[2px] flex h-[89px] w-fit gap-px rounded-[2px] bg-[#111] p-px">
      {Array.from({ length: n }).map((_, i) => (
        <div key={i} className="flex w-[5px] flex-col"><i className="h-[4px] bg-[#480606]" /><i className="h-[35px] bg-[#26250e]" /><i className="flex-1 bg-[#3d390d]" /></div>
      ))}
    </div>
  );
}
const MBTN = "flex h-[15px] w-[15px] items-center justify-center rounded-[2px] border border-[#1b1b1b] text-[11px] font-bold leading-none";
const Star = () => <button aria-label="Freeze" className={`flex h-[15px] w-[12px] items-center justify-center ${BTN}`}><Svg w={8} h={8}><path d="M4 0v8M.5 2l7 4M.5 6l7-4" stroke="#ddd" strokeWidth="1.200" /></Svg></button>;

function Controls({ t }: { t: Track }) {
  const master = t.kind === "master";
  return (
    <div className="flex w-[109px] flex-col pl-px pt-px text-[9px] font-bold">
      <div className="mr-[2px] flex h-[15px] bg-[#1f1f1f]">
        <h3 className={`flex-1 whitespace-nowrap text-center text-[12px] leading-[15px] ${t.selected ? "bg-[#dcdcdc] text-black" : "text-[#b6b6b6]"}`}>{t.name}</h3>
        {t.kind !== "click" && !master && (
          <button aria-label="Playlist" className={`flex w-[11px] justify-center pt-[4px] ${t.bluemenu ? "bg-[#38699a]" : ""}`}><Svg w={6} h={4}><path d="M0 0h6L3 4z" fill={t.bluemenu ? "#0f2436" : "#ccc"} /></Svg></button>
        )}
      </div>
      {!master && (
        <div className="ml-[7px] mt-[4px] flex w-[92px] justify-between">
          {t.kind === "click" ? (
            <><span className={`${MBTN} bg-[#353535]`} /><span className={`${MBTN} bg-[#353535]`} /><button className={`${MBTN} bg-[#3d3d3d] text-[#888]`}>S</button></>
          ) : (
            <>
              <button aria-label="Record enable" className={`${MBTN} bg-linear-to-b from-[#5a4444] to-[#3a2b2b]`}><span className="h-[9px] w-[9px] rounded-full bg-[#d8cccc]" /></button>
              <button aria-label="Input monitor" className={`${MBTN} bg-linear-to-b from-[#6a6a6a] to-[#484848] text-[#eee]`}>I</button>
              <button aria-label="Solo" className={`${MBTN} bg-linear-to-b from-[#6a6a6a] to-[#484848] text-[#eee]`}>S</button>
            </>
          )}
          <button aria-label="Mute" className={`${MBTN} text-white ${t.muted ? "bg-[#c7752b]" : "bg-linear-to-b from-[#6a6a6a] to-[#484848]"}`}>M</button>
        </div>
      )}
      <div className={`ml-[2px] flex w-[102px] flex-col gap-[3px] ${master ? "mt-[2px]" : "mt-[3px]"}`}>
        <Drop label="Track view" value={t.view} />
        {master ? (
          <div className="flex gap-[2px]"><span className={`flex h-[15px] w-[12px] items-center justify-center ${BTN}`}><BlueClock /></span><Drop label="Automation mode" value="auto read" className="flex-1" color="text-[#58ad62]" /></div>
        ) : (
          <>
            <div className="flex gap-[2px]">
              <Star />
              <button className={`h-[15px] w-[29px] leading-none ${t.kind === "audio" ? BTN : "rounded-[2px] border border-[#1b1b1b] bg-[#383838] italic text-[#777]"}`}>dyn</button>
              <Drop label="Automation mode" value="read" className="flex-1" color="text-[#58ad62]" />
            </div>
            <div className="flex gap-[2px]">
              <button aria-label="Timebase" className={`flex h-[15px] w-[12px] items-center justify-center ${BTN}`}>{t.kind !== "audio" || t.elastic ? <Metro /> : <BlueClock />}</button>
              {t.kind === "midi" && <button className={`relative h-[15px] flex-1 pr-[12px] leading-none ${BTN}`}>none<span className="absolute right-[2px] top-[2px]"><Svg w={11} h={9}><path d="M.5.500h6v4h-6zM4 3.500h6v4H4z" stroke="#ccc" fill="#505050" /></Svg></span></button>}
              {t.kind === "audio" && !t.elastic && <span className="flex h-[15px] flex-1 items-center bg-[#262626] pl-[2px]"><Pin /></span>}
              {t.elastic && (
                <button className={`flex h-[15px] flex-1 items-center leading-none ${BTN}`}><span className="flex h-full w-[12px] items-center justify-center border-r border-[#2b2b2b]"><Pin /></span><span className="flex-1">Polyphonic</span><span className="mr-[3px] h-[5px] w-[5px] bg-[#6ddc86]" /></button>
              )}
            </div>
          </>
        )}
      </div>
    </div>
  );
}
function Slots({ insert }: { insert?: [number, string] }) {
  return (
    <div className="flex h-[86px] w-[66px] flex-col justify-between">
      {[0, 1, 2, 3, 4].map((i) =>
        insert && insert[0] === i ? (
          <button key={i} className={`flex h-[15px] w-full leading-[13px] ${BTN}`}>
            <span className="h-full w-[10px] border-r border-[#333] pl-[3px] pt-[4px]"><i className="block h-[4px] w-[4px] rounded-full bg-[#b5b5b5]" /></span>
            <span className="flex-1 whitespace-nowrap text-center">{insert[1]}</span>
          </button>
        ) : (
          <div key={i} className="h-[14px] bg-[#252525] pl-[3px] pt-[4px]"><i className="block h-[4px] w-[4px] rounded-full bg-[#9a9a9a]" /></div>
        )
      )}
    </div>
  );
}
function IO({ t }: { t: Track }) {
  return (
    <div className="flex w-[76px] flex-col">
      {t.input && <Drop label="Input" value={t.input} className="mb-[3px]" />}
      <button className={`flex h-[15px] w-full items-center leading-none ${BTN}`}><span className="flex-1">Analog 1-2</span><span className="flex h-full w-[10px] items-center justify-center border-l border-[#2b2b2b]"><Fader /></span></button>
      <dl className={`mt-[6px] border-[3px] border-[#161616] bg-black px-[3px] leading-[12px] ${G}`}>
        <div className={`flex justify-between ${t.kind !== "master" ? "border-b border-[#222]" : ""}`}><dt>vol</dt><dd>0.0</dd></div>
        {t.kind !== "master" && (t.stereo ? (
          <div className="flex h-[12px] items-center justify-between"><Svg w={3} h={4}><path d="M3 0v4L0 2z" fill="currentColor" /></Svg><span>100</span><i className="mx-[3px] h-full w-px bg-[#222]" /><span>100</span><Svg w={3} h={4}><path d="M0 0v4l3-2z" fill="currentColor" /></Svg></div>
        ) : (
          <div className="flex h-[12px] items-center"><dt className="mr-auto">pan</dt><Svg w={3} h={4}><path d="M0 0v4l3-2z" fill="currentColor" /></Svg><dd className="mx-[7px]">0</dd><Svg w={3} h={4}><path d="M3 0v4L0 2z" fill="currentColor" /></Svg></div>
        ))}
      </dl>
    </div>
  );
}
function SideRuler({ t }: { t: Track }) {
  if (t.kind === "midi")
    return (
      <Svg w={13} h={94}>
        <rect width="13" height="94" fill="#dedede" />
        {Array.from({ length: 20 }).map((_, i) => <path key={i} d={`M0 ${5 + i * 4.300}h8`} stroke="#111" strokeWidth="2" />)}
      </Svg>
    );
  const marks = t.kind === "click" || t.kind === "master" ? [24, 35, 45, 55, 62, 68] : t.stereo ? [9, 24, 39, 54, 69, 84, 90] : [17, 46, 75];
  return (
    <Svg w={13} h={94}>
      <rect width="13" height="94" fill="#333" />
      {marks.map((y, i) => <path key={y} d={`M${i % 3 === 0 ? 5 : 8} ${y}h8`} stroke="#6a6a6a" />)}
    </Svg>
  );
}
function TrackRow({ t, i }: { t: Track; i: number }) {
  const col = "border-r border-[#242424] pt-[3px]";
  return (
    <div className={`flex overflow-hidden border-b-2 border-black bg-[#2d2d2d] text-[9px] font-bold ${i % 3 === 2 ? "h-[94px]" : "h-[95px]"}`}>
      <div className={`flex w-[14px] shrink-0 flex-col items-center justify-between pb-[3px] pt-px ${t.strip}`}>
        <Svg w={10} h={10}><circle cx="5" cy="5" r="5" fill="#9aa3ad" /><path d="M2 3.500h6L5 7.500z" fill="#16202c" /></Svg>
        <Svg w={9} h={9}><rect width="9" height="9" fill="#98a4b4" /><path d="M0 2l4 2 1 3h4" stroke="#1c2a40" strokeWidth="1.200" /></Svg>
      </div>
      <Controls t={t} />
      <div className="w-[16px] pl-[2px]"><Meter n={t.stereo ? 2 : 1} /></div>
      <div className={`w-[74px] pl-[4px] ${col}`}><Slots insert={t.insert} /></div>
      <div className={`w-[73px] pl-[3px] ${col}`}><Slots /></div>
      <div className={`w-[74px] pl-[4px] ${col}`}>
        {t.kind !== "master" && (
          <div className="flex h-[86px] w-[66px] flex-col justify-between">
            {["a", "b", "c", "d", "e"].map((s) => <button key={s} aria-label={`Send ${s}`} className="block h-[14px] bg-[#252525] pl-[3px] text-left leading-[14px] text-[#b8b8b8]">{s}</button>)}
          </div>
        )}
      </div>
      <div className={`w-[81px] pl-[3px] ${col}`}><IO t={t} /></div>
      <div className="flex w-[23px] flex-col items-center gap-[3px] pt-[2px] text-[#c0c0c0]">
        <button aria-label="Track menu" className={`flex h-[17px] w-[17px] items-center justify-center rounded-[3px] border ${t.armed ? "border-[#e8604c] bg-[#c93c2a] text-[#ffd0c8]" : "border-[#666] bg-[#3c3c3c]"}`}><Svg w={10} h={10}><rect x="1" y="1" width="8" height="8" stroke="currentColor" strokeWidth="2" /><rect x="3.500" y="3.500" width="3" height="3" fill="currentColor" /></Svg></button>
        <button aria-label="Comments" className={`flex h-[14px] w-[14px] items-center justify-center ${BTN}`}><Comment /></button>
        <button aria-label="Add" className={`flex h-[14px] w-[14px] items-center justify-center ${BTN}`}><Plus /></button>
      </div>
      <div className="border-l border-black"><SideRuler t={t} /></div>
    </div>
  );
}

/* ---------- timeline ---------- */
function Clip({ from, to, tone, wave, name, db, children }: {
  from: number; to: number; tone: string; wave?: string; name?: string; db?: boolean; children?: React.ReactNode;
}) {
  const w = to - from;
  return (
    <div className={`absolute top-0 h-[92px] overflow-hidden border border-black ${tone}`} style={{ left: from, width: w }}>
      <svg width={w} height={LANE_H} viewBox={`${from} 0 ${w} ${LANE_H}`} className="-ml-px -mt-px block max-w-none" aria-hidden="true">
        {GRID.filter((g) => g.x > from && g.x < to).map((g) => <rect key={g.x} x={g.x} width="1" height={LANE_H} fill="#000" opacity=".2" />)}
        {wave && <path d={wave} className="fill-current" />}
        {children}
      </svg>
      {name && <span className="absolute left-0 top-0 whitespace-nowrap rounded-[2px] bg-white/30 pl-[2px] pr-px text-[10px] font-bold leading-[13px] text-black">{name}</span>}
      {db && (
        <span className="absolute bottom-[2px] left-[2px] flex items-center gap-px text-[10px] font-bold leading-[12px] text-black">
          <span className="flex h-[12px] w-[10px] items-center justify-center rounded-[2px] bg-black/45 text-white/80"><Fader /></span>
          <span className="rounded-[2px] bg-white/30 px-[2px]">0 dB</span>
        </span>
      )}
    </div>
  );
}
const PINK = "bg-[#c26ecd] text-[#432846]";
const GRAY = "bg-[#a9a9a9] text-[#303030]";
const BLUE = "bg-[#4a8dbf] text-[#12405f]";
const MidLine = ({ a, b, y = 46 }: { a: number; b: number; y?: number }) => <rect x={a} y={y} width={b - a} height="1" fill="#000" opacity=".4" />;

function LaneClips({ i }: { i: number }) {
  if (i === 1)
    return (
      <>
        <Clip from={-4} to={197} tone={BLUE}><NoteBars notes={N_INTRO} origin={-12} scale={2.24} /></Clip>
        <Clip from={196} to={776} tone={BLUE} name="PIANO.02-16"><NoteBars notes={N_VERSE} origin={-12} scale={2.24} /></Clip>
        <Clip from={775} to={1354} tone={BLUE} name="PIANO.02-16"><NoteBars notes={N_VERSE} origin={567} scale={2.24} /></Clip>
        <Clip from={1353} to={TW + 20} tone={BLUE} name="PIANO.02-19"><NoteBars notes={N_OUTRO} origin={1238} scale={2.412} /></Clip>
      </>
    );
  if (i === 2)
    return (
      <>
        <Clip from={-4} to={206} tone="bg-[#8a63ba] text-[#2c1c42]" wave={envelope(W_PURPLE, -12, 2.24)}><MidLine a={-4} b={206} /></Clip>
        <Clip from={205} to={268} tone={PINK} name="DG VOX IDE" db wave={envelope(W_PINK1, -12, 2.24)}><MidLine a={205} b={268} /></Clip>
        <Clip from={340} to={558} tone={PINK} name="DG VOX IDEAS.02_06-04" db wave={envelope(W_PINK2, -12, 2.24)}><MidLine a={340} b={558} /></Clip>
        <Clip from={612} to={631} tone={PINK} name="DG" wave={envelope(W_PINK3, 588, 2.24)} />
        <Clip from={630} to={793} tone={PINK} name="DG VOX IDEAS.03_09-04" db wave={envelope(W_PINK4, 588, 2.24)}><MidLine a={630} b={793} /></Clip>
        <Clip from={792} to={1209} tone={GRAY} name="DG VOX IDEAS.03_11-01" db wave={envelope(W_GRAY1, 588, 2.24)}>
          <MidLine a={792} b={1209} /><path d="M1190.500 0v92" stroke="#111" /><path d="M1191 0l17 92" stroke="#fff" strokeWidth="1.500" />
        </Clip>
        <Clip from={1208} to={1354} tone={GRAY} name="DG VOX IDEAS.03_12-01" db wave={envelope(W_GRAY2, 0, 1)}><MidLine a={1208} b={1354} /></Clip>
        <Clip from={1353} to={TW + 20} tone={PINK} name="DG VOX IDEAS.03_13" db wave={envelope(W_PINK5, 1238, 2.412)}><MidLine a={1353} b={TW + 20} /></Clip>
      </>
    );
  if (i === 3)
    return (
      <>
        {[268, 558].map((x) => (
          <Clip key={x} from={x} to={x + 73} tone="bg-[#b53416] text-[#402422]" name="Burn the Danc" db wave={band(x, x + 80, 23, 8, 2, 1) + band(x, x + 80, 69, 8, 2, 5)}><MidLine a={x} b={x + 73} /></Clip>
        ))}
      </>
    );
  if (i === 4)
    return (
      <Clip from={775} to={1366} tone="bg-[#5fb878] text-[#263e2e]" name="Burn the Dancehall Down cool post chrs (Synth)-03" db wave={band(776, 1358, 24, 6, 7, 11) + band(776, 1358, 69, 6, 7, 11)}>
        <MidLine a={775} b={1366} /><MidLine a={1350} b={1366} y={24} /><MidLine a={1350} b={1366} y={69} />
      </Clip>
    );
  if (i === 5)
    return (
      <Clip from={196} to={657} tone="bg-[#b9a42f] text-[#453f20]" name="DG BG 1_01-01" db wave={envelope(W_BG, 168, 2.904) + envelope(W_BG, 168, 2.904, 46, 832)}><MidLine a={196} b={657} /></Clip>
    );
  return null;
}

function GridLines({ h, dark = false }: { h: number; dark?: boolean }) {
  return (
    <svg width="2600" height={h} className="absolute left-0 top-0 block max-w-none" shapeRendering="crispEdges" aria-hidden="true">
      {GRID.map((g) => <rect key={g.x} x={g.x} width="1" height={h} fill={dark ? (g.beat ? "#4c4c57" : "#3a3a40") : g.major ? "#94949f" : g.beat ? "#868690" : "#80808a"} />)}
    </svg>
  );
}

const LABEL = "flex shrink-0 items-center border-b border-[#191919] pl-[6px] pr-[5px]";
function LeftColumn() {
  const head = "border-r-2 border-black text-center";
  const plus = <span className="text-[#777]"><Plus s={7} /></span>;
  return (
    <div className="flex w-[478px] shrink-0 flex-col bg-[#242424] text-[10px] font-bold text-[#858585]">
      <div className={`h-[16px] bg-[#272727] text-[#b0b0b0] ${LABEL}`}><button aria-label="Ruler view" className="flex w-[23px] gap-[3px]"><ListIcon /><Tri className="text-[#aaa]" /></button>Bars|Beats</div>
      <div className={`h-[17px] ${LABEL}`}><span className="w-[23px]" />Min:Secs</div>
      <div className={`h-[17px] ${LABEL}`}><span className="w-[23px] pl-[4px]"><Svg w={5} h={6}><path d="M0 0v6l5-3z" fill="#888" /></Svg></span><span className="flex-1">Tempo</span>{plus}</div>
      <div className={`h-[16px] ${LABEL}`}><span className="w-[23px]" /><span className="flex-1">Meter</span>{plus}</div>
      <div className={`h-[17px] ${LABEL}`}><span className="w-[23px] pl-[2px] text-[#ddd]"><Comment /></span><span className="flex-1">Markers</span><span className="mr-[10px]"><Svg w={9} h={9}><rect x=".5" y=".5" width="8" height="8" fill="#555" stroke="#888" /><rect x="3" y="3" width="3" height="3" fill="#aaa" /></Svg></span>{plus}</div>
      <div className="grid h-[18px] shrink-0 grid-cols-[140px_74px_73px_73px_83px_22px_1fr] border-y-2 border-black bg-[#383838] text-[9px] leading-[14px] text-[#e6e6e6]">
        <div className="flex items-center gap-[3px] border-r-2 border-black pl-[3px]"><GridIcon /><Tri className="text-[#aaa]" /><span className="ml-auto"><BlueClock /></span><span className="pr-[3px]"><Tri className="text-[#aaa]" /></span></div>
        <div className={head}>INSERTS A-E</div><div className={head}>INSERTS F-J</div><div className={head}>SENDS A-E</div><div className={head}>I / O</div>
        <div className={`flex items-center justify-center ${head}`}><Flag color="#f2bb35" /></div><div />
      </div>
      <div>{TRACKS.map((t, i) => <TrackRow key={i} t={t} i={i} />)}</div>
      <div className="flex-1" />
      <div className="flex h-[15px] shrink-0 border-t border-[#1a1a1a] bg-[#2b2b2b]">
        <button aria-label="Scroll to start" className="flex w-[15px] items-center justify-center border-r border-[#1a1a1a]"><Svg w={9} h={8}><path d="M4 1v6L0 4zM3 4h3M8 0v8" stroke="#999" fill="#999" /></Svg></button>
        <button aria-label="Scroll down" className="flex w-[15px] items-center justify-center border-r border-[#1a1a1a]"><Svg w={9} h={9}><path d="M1 1h7M4.500 3v4M2.500 5.500h4l-2 3z" stroke="#999" fill="#999" /></Svg></button>
      </div>
    </div>
  );
}

const BARS = Array.from({ length: 13 }, (_, k) => 17 + k);
const SECS = Array.from({ length: 41 }, (_, k) => 50 + k);
const clock = (s: number) => `${Math.floor(s / 60)}:${String(s % 60).padStart(2, "0")}`;
const MARKERS: [string, number, string, string][] = [["C1", 196, "#ee9ad8", "bg-[#d68cc6]"], ["V2", 1353, "#f2b632", "bg-[#d9a844]"]];

function Timeline() {
  const cell = "flex w-[16px] items-center justify-center bg-[#333] text-[#888] h-full";
  return (
    <div className="relative flex min-w-0 flex-1 flex-col overflow-hidden bg-[#292929]">
      <div className="relative h-[16px] shrink-0 bg-[#212121] text-[10px] font-bold leading-[16px] text-[#b4b4b4]">
        <span className="absolute left-[2px] top-[2px]"><Svg w={5} h={10}><path d="M5 0v10L0 5z" fill="#4a90cf" /></Svg></span>
        {BARS.map((b) => (
          <React.Fragment key={b}>
            <span className="absolute top-0 h-full border-l border-[#3a3a3a] pl-[2px]" style={{ left: Math.round(BAR17 + (b - 17) * BAR) }}>{b}</span>
            <span className="absolute top-0 h-full border-l border-[#333]" style={{ left: Math.round(BAR17 + (b - 16.5) * BAR) }} />
          </React.Fragment>
        ))}
      </div>
      <div className="relative h-[17px] shrink-0 bg-[#191919] text-[10px] font-bold leading-[17px] text-[#858585]">
        <span className="absolute left-0 top-0">9</span>
        {SECS.map((s) => (
          <span key={s} className="absolute top-0 h-full border-l border-[#353535] pl-[2px]" style={{ left: Math.round(302 + (s - 56) * 45.81) }}>
            {s === 90 ? "1" : clock(s)}
          </span>
        ))}
      </div>
      <div className="h-[17px] shrink-0 border-b border-[#3c5348] bg-[#2b6446]" />
      <div className="h-[15px] shrink-0 bg-[#2a5d73]" />
      <div className="h-[18px] shrink-0 border-b-2 border-black bg-[#242424]" />
      <div className="relative h-[16px] shrink-0 overflow-hidden border-b-2 border-black bg-[#282828]"><GridLines h={16} dark /></div>
      <div className="relative border-b border-[#e8e8e8]">
        <div className="absolute inset-0 overflow-hidden bg-[#787878]"><GridLines h={860} /></div>
        <div className="relative border-t border-[#bdbbbd]">
          {TRACKS.map((t, i) => (
            <div key={i} className={`relative border-b border-[#666] ${i % 3 === 2 ? "h-[94px]" : "h-[95px]"}`}>
              {(i === 0 || i === 8) && <div className="absolute inset-x-0 top-[23px] h-[2px] bg-white" />}
              {t.stereo && i < 8 && <div className="absolute inset-x-0 top-[46px] h-px bg-[#707070]" />}
              <LaneClips i={i} />
            </div>
          ))}
        </div>
      </div>
      <div className="flex-1" />
      <div className="flex h-[15px] shrink-0 items-center border-t border-[#242424] bg-[#1e1e1e]">
        <div className="min-w-0 flex-1 pl-[23%]"><div className="h-[8px] w-[25%] rounded-full bg-[#3a3a3a]" /></div>
        <div className="flex h-full gap-px">
          <button aria-label="Scroll left" className={cell}><Svg w={4} h={6}><path d="M4 0v6L0 3z" fill="#aaa" /></Svg></button>
          <button aria-label="Scroll right" className={cell}><Svg w={4} h={6}><path d="M0 0v6l4-3z" fill="#aaa" /></Svg></button>
          <button aria-label="Zoom out horizontally" className="flex h-full w-[14px] items-center justify-center bg-[#333]"><i className="h-[2px] w-[6px] bg-[#888]" /></button>
          <button aria-label="Zoom in horizontally" className="flex h-full w-[14px] items-center justify-center bg-[#333] text-[#888]"><Plus s={6} /></button>
          <button aria-label="Scroll to end" className="flex h-full w-[13px] items-center justify-center"><Svg w={9} h={8}><path d="M4 1v6L0 4zM3 4h3M8 0v8" stroke="#888" fill="#888" /></Svg></button>
        </div>
      </div>
      {MARKERS.map(([n, x, c, line]) => (
        <React.Fragment key={n}>
          <div className="absolute top-[69px] flex items-center gap-[3px] text-[10px] font-bold leading-[11px] text-[#eee]" style={{ left: x - 4 }}><Flag color={c} />{n}</div>
          <div className={`absolute top-[83px] h-[112px] w-px ${line}`} style={{ left: x }} />
          <div className={`absolute top-[287px] h-[3px] w-px ${line}`} style={{ left: x }} />
          <div className={`absolute top-[384px] h-[190px] w-px ${line}`} style={{ left: x }} />
          {n === "V2" && <div className={`absolute top-[574px] h-[378px] w-px ${line}`} style={{ left: x }} />}
          {n === "C1" && <div className={`absolute top-[666px] h-[286px] w-px ${line}`} style={{ left: x }} />}
        </React.Fragment>
      ))}
      <div className="absolute left-[90px] top-0 h-[99px] w-px bg-[#b8301f]" />
    </div>
  );
}

function RightRail() {
  const box = "flex w-full shrink-0 items-center justify-center bg-[#303030] text-[#999] border-b border-[#1b1b1b]";
  return (
    <div className="flex w-[14px] shrink-0 flex-col bg-[#1c1c1c]">
      <button aria-label="Ruler height" className={`h-[16px] ${box}`}><Svg w={7} h={10}><path d="M3.500 3v4M1 9.500h5M0 7.500h7M1.500 3.500h4L3.500 0z" stroke="#888" fill="#888" /></Svg></button>
      <div className="h-[17px] shrink-0 bg-[#2a2a2a]" />
      <div className="h-[17px] shrink-0 border-b border-[#3c5348] bg-[#2b6446]" />
      <div className="h-[15px] shrink-0 bg-[#2a5d73]" />
      <div className="h-[19px] shrink-0 bg-[#242424]" />
      <AZ yellow />
      <button aria-label="Audio height" className={`mt-[2px] h-[18px] ${box}`}><Svg w={11} h={12}><path d="M1 6h1V2h1v8h1V1h1v3l2 2-2 2v3M7 3l4 3-4 3z" stroke="#777" fill="#777" /></Svg></button>
      <button aria-label="MIDI height" className={`h-[19px] ${box}`}><Svg w={10} h={8}><path d="M0 1.500h5M5 6.500h5" stroke="#888" strokeWidth="2" /></Svg></button>
      <div className="flex-1" />
      <div className={`h-[17px] ${box}`} />
      <div className={`h-[16px] ${box}`} />
      <button aria-label="Zoom out vertically" className={`h-[15px] ${box}`}><i className="h-[2px] w-[6px] bg-[#888]" /></button>
      <button aria-label="Zoom in vertically" className={`h-[14px] ${box}`}><Plus s={6} /></button>
      <div className="h-[15px] shrink-0 bg-[#292929]" />
    </div>
  );
}

const TABS: [string, boolean, boolean][] = [
  ["MIDI EDITOR", true, false], ["CLIP EFFECTS", true, true], ["MELODYNE", false, true], ["RX SPECTRAL EDITOR", false, true],
  ["SPECTRALAYERS", false, true], ["WAVELAB", false, true], ["ACOUSTICA", false, true], ["DYNASSIST", false, true],
];

export default function App() {
  return (
    <div className={`flex h-screen flex-col overflow-hidden bg-black ${F}`}>
      <Toolbar />
      <div className="mt-[4px] flex min-h-0 flex-1">
        <Sidebar />
        <main className="ml-[5px] mr-[5px] flex min-w-0 flex-1 flex-col gap-[4px]">
          <Overview />
          <div className="flex min-h-0 flex-1">
            <LeftColumn />
            <Timeline />
            <RightRail />
          </div>
        </main>
      </div>
      <footer className="mx-[4px] mb-[4px] mt-[4px] flex h-[21px] shrink-0 items-start bg-[#181818]">
        <button aria-label="Docked editors" className="mx-[5px] mt-[5px]"><CircleMenu /></button>
        <nav className="flex text-[10px] font-bold leading-[17px]">
          {TABS.map(([n, on, pop]) => (
            <button key={n} className={`flex h-[18px] items-center gap-[9px] whitespace-nowrap border-r border-[#161616] bg-[#232323] px-[15px] ${on ? "text-[#b2b2b2]" : "text-[#555]"}`}>{n}{pop && <PopOut />}</button>
          ))}
        </nav>
      </footer>
    </div>
  );
}
